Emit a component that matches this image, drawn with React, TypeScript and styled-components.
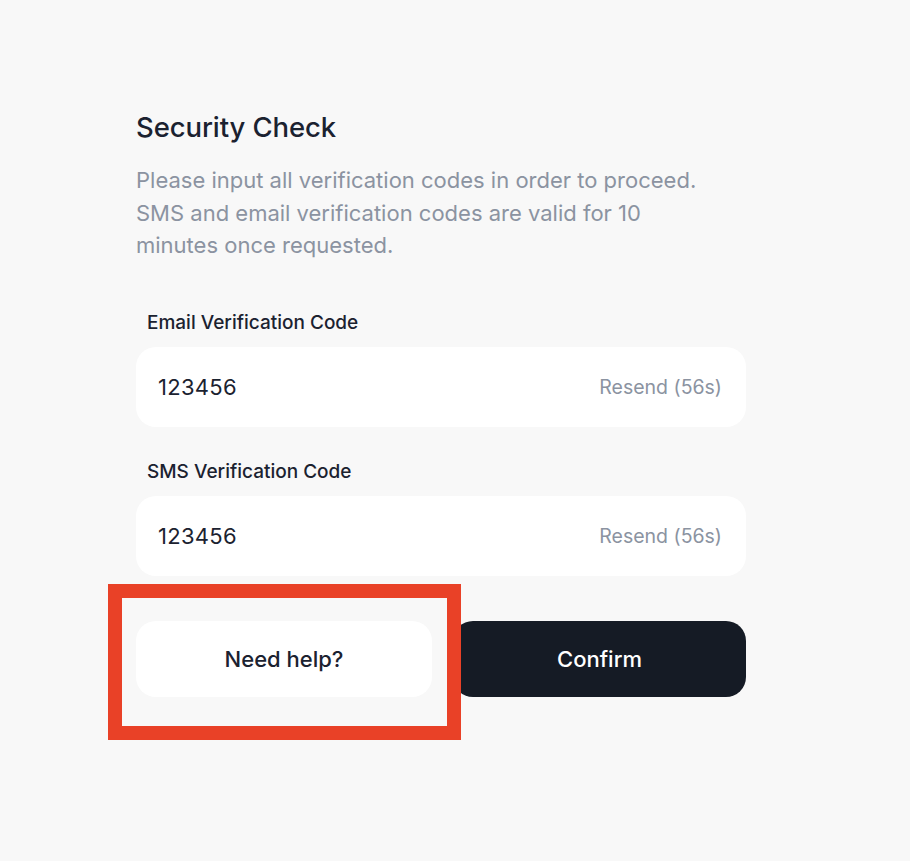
import React from "react";
import styled, { createGlobalStyle } from "styled-components";

const Global = createGlobalStyle`
  html, body { margin: 0; padding: 0; background: #f8f8f8; }
  body { font-family: Inter, "Noto Sans", sans-serif; -webkit-font-smoothing: antialiased; }
  * { box-sizing: border-box; }
`;

const Page = styled.div`
  width: 910px;
  height: 861px;
  background: #f8f8f8;
  padding: 108px 0 0 136px;
  position: relative;
`;

const Column = styled.div`
  width: 610px;
  display: flex;
  flex-direction: column;
`;

const Title = styled.h1`
  margin: 0;
  font-size: 27.5px;
  font-weight: 500;
  color: #1b2230;
  line-height: 38px;
  letter-spacing: -0.1px;
`;

const Description = styled.p`
  margin: 18px 0 0;
  font-size: 22px;
  line-height: 32.5px;
  color: #8b93a1;
  font-weight: 400;
  width: 562px;
`;

const Field = styled.div<{ $top: number }>`
  display: flex;
  flex-direction: column;
  margin-top: ${(p) => p.$top}px;
`;

const Label = styled.label`
  font-size: 19px;
  font-weight: 500;
  color: #1b2230;
  padding-left: 11px;
  line-height: 26px;
  margin-bottom: 11px;
`;

const InputBox = styled.div`
  height: 80px;
  background: #ffffff;
  border-radius: 20px;
  display: flex;
  align-items: center;
  justify-content: space-between;
  padding: 0 24px 0 22px;
`;

const Value = styled.span`
  font-size: 22px;
  color: #1b2230;
  letter-spacing: 0.3px;
`;

const Resend = styled.span`
  font-size: 19.5px;
  color: #8b93a1;
`;

const Actions = styled.div`
  display: grid;
  grid-template-columns: 296px 293px;
  column-gap: 21px;
  margin-top: 45px;
`;

const Button = styled.button<{ $dark?: boolean }>`
  height: 76px;
  border: none;
  border-radius: 20px;
  font-family: inherit;
  font-size: 22px;
  font-weight: 500;
  background: ${(p) => (p.$dark ? "#151b25" : "#ffffff")};
  color: ${(p) => (p.$dark ? "#ffffff" : "#1b2230")};
  cursor: pointer;
`;

const Highlight = styled.div`
  position: absolute;
  left: 108px;
  top: 584px;
  width: 353px;
  height: 156px;
  border: 14px solid #e94127;
  pointer-events: none;
`;

export default function App() {
  return (
    <Page>
      <Global />
      <Column>
        <Title>Security Check</Title>
        <Description>
          Please input all verification codes in order to proceed. SMS and email verification codes are valid for 10
          minutes once requested.
        </Description>
        <Field $top={48}>
          <Label>Email Verification Code</Label>
          <InputBox>
            <Value>123456</Value>
            <Resend>Resend (56s)</Resend>
          </InputBox>
        </Field>
        <Field $top={32}>
          <Label>SMS Verification Code</Label>
          <InputBox>
            <Value>123456</Value>
            <Resend>Resend (56s)</Resend>
          </InputBox>
        </Field>
        <Actions>
          <Button>Need help?</Button>
          <Button $dark>Confirm</Button>
        </Actions>
      </Column>
      <Highlight />
    </Page>
  );
}
